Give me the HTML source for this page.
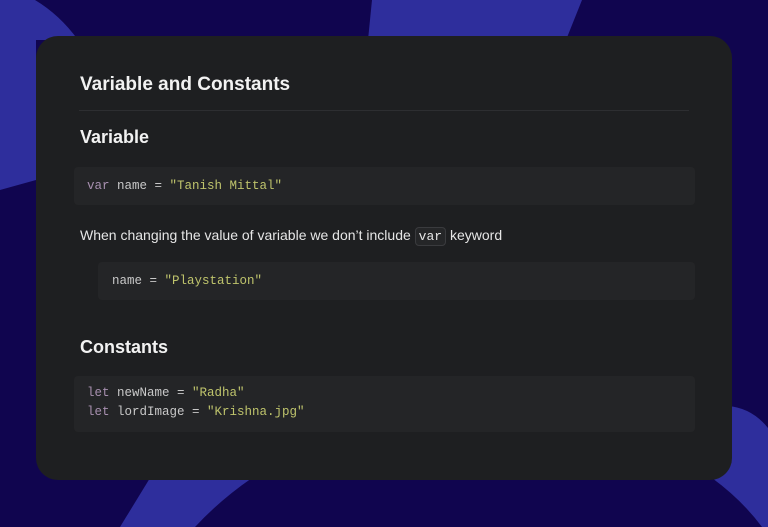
<!DOCTYPE html>
<html><head><style>
body{margin:0;width:768px;height:527px;overflow:hidden;background:#10054f;position:relative;font-family:"Liberation Sans",sans-serif}
svg.bg{position:absolute;left:0;top:0;width:768px;height:527px}
.card{position:absolute;left:36px;top:36px;width:696px;height:444px;background:#1e1f21;border-radius:22px}
.t{position:absolute;color:#f2f2f2;font-weight:bold;white-space:nowrap}
.hr{position:absolute;left:79px;top:110px;width:610px;height:1px;background:#2d2e31}
.code{position:absolute;background:#242527;border-radius:4px;font-family:"Liberation Mono",monospace;font-size:12.5px;color:#c8c8c8;white-space:pre;line-height:19px}
.k{color:#a890b0}.s{color:#bfc46c}
.p{position:absolute;left:80px;top:227px;color:#e6e6e6;font-size:14px;white-space:nowrap}
.ic{font-family:"Liberation Mono",monospace;font-size:13px;border:1px solid #3a3b3e;background:#252628;border-radius:4px;padding:1px 3px}
</style></head><body>
<svg class="bg" viewBox="0 0 768 527">
<path d="M0 0 L35 0 Q60 15 78 40 L36 40 L36 180 L0 190 Z" fill="#2e2e9c"/>
<path d="M372 0 L582 0 L566 40 L368 40 Z" fill="#2e2e9c"/>
<path d="M150 478 L252 478 Q220 500 195 527 L120 527 Z" fill="#2e2e9c"/>
<path d="M728 406 Q752 408 768 428 L768 527 L762 527 Q742 500 712 478 Z" fill="#2e2e9c"/>
</svg>
<div class="card"></div>
<div class="t" style="left:80px;top:74px;font-size:19px">Variable and Constants</div>
<div class="hr"></div>
<div class="t" style="left:80px;top:127px;font-size:18px">Variable</div>
<div class="code" style="left:74px;top:167px;width:621px;height:38px;"><div style="position:absolute;left:13px;top:10px"><span class="k">var</span> name = <span class="s">"Tanish Mittal"</span></div></div>
<div class="p">When changing the value of variable we don’t include <span class="ic">var</span> keyword</div>
<div class="code" style="left:98px;top:262px;width:597px;height:38px;"><div style="position:absolute;left:14px;top:10px">name = <span class="s">"Playstation"</span></div></div>
<div class="t" style="left:80px;top:337px;font-size:18px">Constants</div>
<div class="code" style="left:74px;top:376px;width:621px;height:56px;"><div style="position:absolute;left:13px;top:8px"><span class="k">let</span> newName = <span class="s">"Radha"</span>
<span class="k">let</span> lordImage = <span class="s">"Krishna.jpg"</span></div></div>
</body></html>
